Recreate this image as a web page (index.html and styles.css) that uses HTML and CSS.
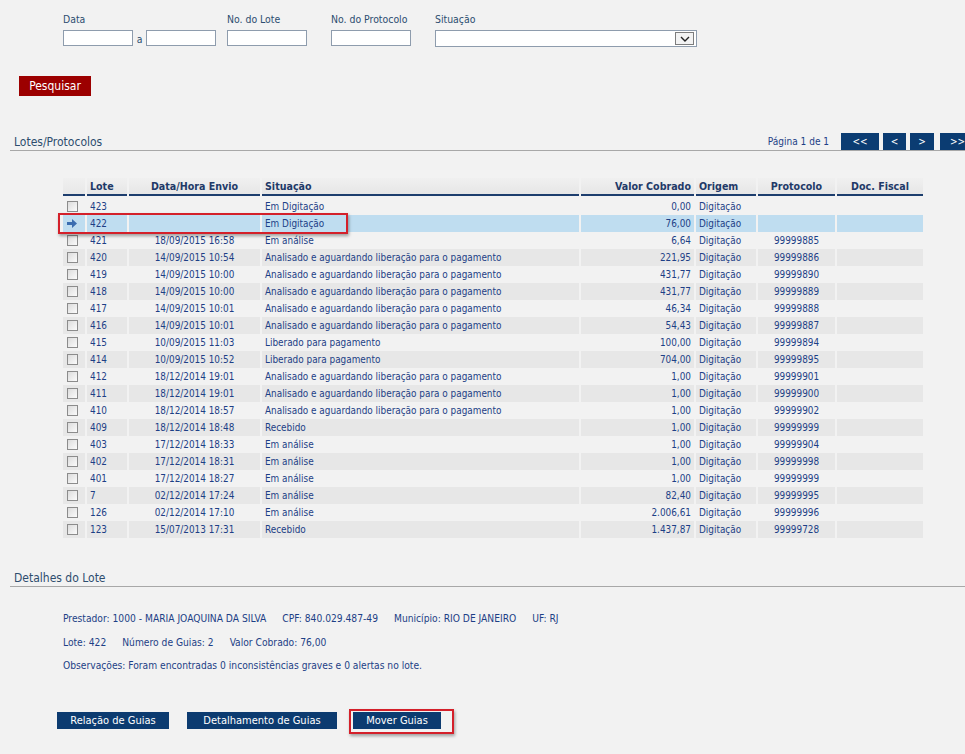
FILE: index.html
```html
<!DOCTYPE html>
<html lang="pt-BR">
<head>
<meta charset="utf-8">
<title>Lotes/Protocolos</title>
<link rel="stylesheet" href="styles.css">
</head>
<body>
<div class="page">
  <div class="filters">
    <div class="field f-data">
      <label class="lbl">Data</label>
      <div class="inline">
        <input class="inp w70" type="text"><span class="sep">a</span><input class="inp w70" type="text">
      </div>
    </div>
    <div class="field f-lote">
      <label class="lbl">No. do Lote</label>
      <input class="inp w80" type="text">
    </div>
    <div class="field f-prot">
      <label class="lbl">No. do Protocolo</label>
      <input class="inp w80" type="text">
    </div>
    <div class="field">
      <label class="lbl">Situação</label>
      <div class="select">
        <span class="select-btn"><svg width="10" height="6" viewBox="0 0 10 6"><polyline points="1,1 5,5 9,1" fill="none" stroke="#222" stroke-width="1.4"/></svg></span>
      </div>
    </div>
  </div>

  <div class="search-row"><button class="btn-red" type="button">Pesquisar</button></div>

  <div class="section-head">
    <span class="section-title">Lotes/Protocolos</span>
    <div class="pager">
      <span class="pager-info">Página 1 de 1</span>
      <button class="pbtn p1" type="button">&lt;&lt;</button>
      <button class="pbtn p2" type="button">&lt;</button>
      <button class="pbtn p3" type="button">&gt;</button>
      <button class="pbtn p4" type="button">&gt;&gt;</button>
    </div>
  </div>

  <table class="grid">
    <colgroup>
      <col class="c-cb"><col class="c-lote"><col class="c-data"><col class="c-sit"><col class="c-val"><col class="c-ori"><col class="c-prot"><col class="c-doc">
    </colgroup>
    <thead>
      <tr>
        <th></th>
        <th class="l">Lote</th>
        <th>Data/Hora Envio</th>
        <th class="l">Situação</th>
        <th class="r">Valor Cobrado</th>
        <th class="l">Origem</th>
        <th>Protocolo</th>
        <th>Doc. Fiscal</th>
      </tr>
    </thead>
    <tbody>
      <tr><td><span class="cb"></span></td><td>423</td><td class="c"></td><td>Em Digitação</td><td class="r">0,00</td><td>Digitação</td><td class="c"></td><td></td></tr>
      <tr class="sel"><td><svg class="arrow" width="10" height="9" viewBox="0 0 10 9"><path d="M0 3h5V0l5 4.5L5 9V6H0z" fill="#3a6db0"/></svg></td><td>422</td><td class="c"></td><td>Em Digitação</td><td class="r">76,00</td><td>Digitação</td><td class="c"></td><td></td></tr>
      <tr><td><span class="cb"></span></td><td>421</td><td class="c">18/09/2015 16:58</td><td>Em análise</td><td class="r">6,64</td><td>Digitação</td><td class="c">99999885</td><td></td></tr>
      <tr><td><span class="cb"></span></td><td>420</td><td class="c">14/09/2015 10:54</td><td>Analisado e aguardando liberação para o pagamento</td><td class="r">221,95</td><td>Digitação</td><td class="c">99999886</td><td></td></tr>
      <tr><td><span class="cb"></span></td><td>419</td><td class="c">14/09/2015 10:00</td><td>Analisado e aguardando liberação para o pagamento</td><td class="r">431,77</td><td>Digitação</td><td class="c">99999890</td><td></td></tr>
      <tr><td><span class="cb"></span></td><td>418</td><td class="c">14/09/2015 10:00</td><td>Analisado e aguardando liberação para o pagamento</td><td class="r">431,77</td><td>Digitação</td><td class="c">99999889</td><td></td></tr>
      <tr><td><span class="cb"></span></td><td>417</td><td class="c">14/09/2015 10:01</td><td>Analisado e aguardando liberação para o pagamento</td><td class="r">46,34</td><td>Digitação</td><td class="c">99999888</td><td></td></tr>
      <tr><td><span class="cb"></span></td><td>416</td><td class="c">14/09/2015 10:01</td><td>Analisado e aguardando liberação para o pagamento</td><td class="r">54,43</td><td>Digitação</td><td class="c">99999887</td><td></td></tr>
      <tr><td><span class="cb"></span></td><td>415</td><td class="c">10/09/2015 11:03</td><td>Liberado para pagamento</td><td class="r">100,00</td><td>Digitação</td><td class="c">99999894</td><td></td></tr>
      <tr><td><span class="cb"></span></td><td>414</td><td class="c">10/09/2015 10:52</td><td>Liberado para pagamento</td><td class="r">704,00</td><td>Digitação</td><td class="c">99999895</td><td></td></tr>
      <tr><td><span class="cb"></span></td><td>412</td><td class="c">18/12/2014 19:01</td><td>Analisado e aguardando liberação para o pagamento</td><td class="r">1,00</td><td>Digitação</td><td class="c">99999901</td><td></td></tr>
      <tr><td><span class="cb"></span></td><td>411</td><td class="c">18/12/2014 19:01</td><td>Analisado e aguardando liberação para o pagamento</td><td class="r">1,00</td><td>Digitação</td><td class="c">99999900</td><td></td></tr>
      <tr><td><span class="cb"></span></td><td>410</td><td class="c">18/12/2014 18:57</td><td>Analisado e aguardando liberação para o pagamento</td><td class="r">1,00</td><td>Digitação</td><td class="c">99999902</td><td></td></tr>
      <tr><td><span class="cb"></span></td><td>409</td><td class="c">18/12/2014 18:48</td><td>Recebido</td><td class="r">1,00</td><td>Digitação</td><td class="c">99999999</td><td></td></tr>
      <tr><td><span class="cb"></span></td><td>403</td><td class="c">17/12/2014 18:33</td><td>Em análise</td><td class="r">1,00</td><td>Digitação</td><td class="c">99999904</td><td></td></tr>
      <tr><td><span class="cb"></span></td><td>402</td><td class="c">17/12/2014 18:31</td><td>Em análise</td><td class="r">1,00</td><td>Digitação</td><td class="c">99999998</td><td></td></tr>
      <tr><td><span class="cb"></span></td><td>401</td><td class="c">17/12/2014 18:27</td><td>Em análise</td><td class="r">1,00</td><td>Digitação</td><td class="c">99999999</td><td></td></tr>
      <tr><td><span class="cb"></span></td><td>7</td><td class="c">02/12/2014 17:24</td><td>Em análise</td><td class="r">82,40</td><td>Digitação</td><td class="c">99999995</td><td></td></tr>
      <tr><td><span class="cb"></span></td><td>126</td><td class="c">02/12/2014 17:10</td><td>Em análise</td><td class="r">2.006,61</td><td>Digitação</td><td class="c">99999996</td><td></td></tr>
      <tr><td><span class="cb"></span></td><td>123</td><td class="c">15/07/2013 17:31</td><td>Recebido</td><td class="r">1.437,87</td><td>Digitação</td><td class="c">99999728</td><td></td></tr>
    </tbody>
  </table>

  <div class="section-head sh2">
    <span class="section-title">Detalhes do Lote</span>
  </div>

  <div class="details">
    <div class="dline"><span>Prestador: 1000 - MARIA JOAQUINA DA SILVA</span><span>CPF: 840.029.487-49</span><span>Município: RIO DE JANEIRO</span><span>UF: RJ</span></div>
    <div class="dline"><span>Lote: 422</span><span>Número de Guias: 2</span><span>Valor Cobrado: 76,00</span></div>
    <div class="dline"><span>Observações: Foram encontradas 0 inconsistências graves e 0 alertas no lote.</span></div>
  </div>

  <div class="actions">
    <button class="btn-blue b1" type="button">Relação de Guias</button>
    <button class="btn-blue b2" type="button">Detalhamento de Guias</button>
    <button class="btn-blue b3" type="button">Mover Guias</button>
  </div>

  <div class="mark mark-row"></div>
  <div class="mark mark-btn"></div>
</div>
</body>
</html>
```

FILE: styles.css
```css
html, body {
  margin: 0;
  padding: 0;
  background: #f2f2f2;
  overflow: hidden;
}
body {
  font-family: "DejaVu Sans Condensed", "DejaVu Sans", sans-serif;
  font-size: 10px;
  color: #1d3f86;
}
.page {
  position: relative;
  width: 965px;
  height: 754px;
}

/* filters */
.filters {
  display: flex;
  padding: 13px 0 0 63px;
}
.field {
  display: flex;
  flex-direction: column;
}
.f-data { margin-right: 11px; }
.f-lote { margin-right: 24px; }
.f-prot { margin-right: 24px; }
.lbl {
  font-size: 10.4px;
  line-height: 13px;
  color: #2c4d70;
  margin-bottom: 4px;
}
.inline {
  display: flex;
  align-items: center;
}
.sep {
  width: 13px;
  text-align: center;
  font-size: 10.4px;
  color: #2c4d70;
  padding-top: 2px;
}
.inp {
  box-sizing: border-box;
  height: 16px;
  margin: 0;
  border: 1px solid #8e9cad;
  background: #fff;
  padding: 0 2px;
  font: inherit;
}
.w70 { width: 70px; }
.w80 { width: 80px; }
.select {
  box-sizing: border-box;
  width: 262px;
  height: 17px;
  border: 1px solid #8e9cad;
  background: #fff;
  display: flex;
  justify-content: flex-end;
  align-items: center;
  padding-right: 2px;
}
.select-btn {
  box-sizing: border-box;
  width: 19px;
  height: 13px;
  border: 1px solid #7d7d7d;
  background: #f3f3f3;
  display: flex;
  align-items: center;
  justify-content: center;
}

.search-row {
  padding: 29px 0 0 19px;
}
.btn-red {
  display: block;
  width: 72px;
  height: 20px;
  border: 0;
  margin: 0;
  padding: 0;
  background: #9c0000;
  color: #fff;
  font-family: "DejaVu Sans Condensed", "DejaVu Sans", sans-serif;
  font-size: 12px;
}

/* section heads */
.section-head {
  display: flex;
  align-items: flex-end;
  justify-content: space-between;
  margin: 37px 0 0 10px;
  border-bottom: 1px solid #a8a8a8;
  height: 17px;
}
.section-title {
  font-size: 12px;
  line-height: 14px;
  color: #2e4d6e;
  padding: 0 0 1px 4px;
}
.pager {
  display: flex;
  align-items: flex-end;
  margin-right: -10px;
}
.pager-info {
  font-size: 10px;
  line-height: 13px;
  color: #1d3f86;
  margin-right: 12px;
  padding-bottom: 2px;
}
.pbtn {
  height: 17px;
  border: 0;
  margin: 0;
  padding: 0;
  background: #0b3c72;
  color: #fff;
  font-family: "DejaVu Sans Condensed", "DejaVu Sans", sans-serif;
  font-size: 10px;
}
.p1 { width: 38px; margin-right: 4px; }
.p2 { width: 23px; margin-right: 4px; }
.p3 { width: 24px; margin-right: 6px; }
.p4 { width: 35px; }

/* grid */
.grid {
  margin: 27px 0 0 61px;
  border-collapse: separate;
  border-spacing: 2px 0;
  table-layout: fixed;
  width: 864px;
  font-size: 9.9px;
}
.c-cb { width: 22px; }
.c-lote { width: 40px; }
.c-data { width: 131px; }
.c-sit { width: 317px; }
.c-val { width: 113px; }
.c-ori { width: 60px; }
.c-prot { width: 77px; }
.c-doc { width: 86px; }
.grid th {
  height: 20px;
  padding: 0 3px 4px;
  box-sizing: border-box;
  font-weight: bold;
  font-size: 10.6px;
  line-height: 14px;
  color: #1f3a68;
  text-align: center;
  background: linear-gradient(#f0f0f0, #e4e4e4);
  box-shadow: inset 0 -2px 0 #f2f2f2, inset 0 -4px 0 #1d3e6e;
  white-space: nowrap;
}
.grid th:first-child {
  background: linear-gradient(#f0f0f0, #e6e6e6);
}
.grid td {
  height: 17px;
  padding: 0 3px;
  line-height: 17px;
  white-space: nowrap;
  overflow: hidden;
  vertical-align: middle;
}
.grid .l { text-align: left; }
.grid .r { text-align: right; }
.grid .c { text-align: center; }
.grid tbody tr:nth-child(even) td { background: #e7e7e7; }
.grid tbody tr.sel td { background: #bfddf0; }
.grid td:first-child { padding: 0 0 0 4px; }
.cb {
  display: block;
  box-sizing: border-box;
  width: 11px;
  height: 11px;
  border: 1px solid #8c8c8c;
  background: linear-gradient(135deg, #dcdcdc, #fbfbfb);
}
.arrow { display: block; }

.sh2 {
  margin-top: 31px;
}

/* details */
.details {
  padding: 20px 0 0 63px;
  font-size: 10.2px;
}
.dline {
  display: flex;
  gap: 16px;
  line-height: 23.5px;
  height: 23.5px;
  align-items: center;
}

.actions {
  display: flex;
  padding: 34px 0 0 57px;
}
.btn-blue {
  height: 17px;
  border: 0;
  margin: 0;
  padding: 0;
  background: #0c3b70;
  color: #fff;
  font-family: "DejaVu Sans Condensed", "DejaVu Sans", sans-serif;
  font-size: 11px;
}
.b1 { width: 112px; margin-right: 18px; }
.b2 { width: 150px; margin-right: 16px; }
.b3 { width: 88px; }

/* annotation overlays */
.mark {
  position: absolute;
  box-sizing: border-box;
  border: 2px solid #d4202a;
  box-shadow: 1px 2px 3px rgba(0, 0, 0, 0.35);
}
.mark-row {
  left: 58px;
  top: 213px;
  width: 290px;
  height: 21px;
}
.mark-btn {
  left: 349px;
  top: 709px;
  width: 105px;
  height: 25px;
}
```
